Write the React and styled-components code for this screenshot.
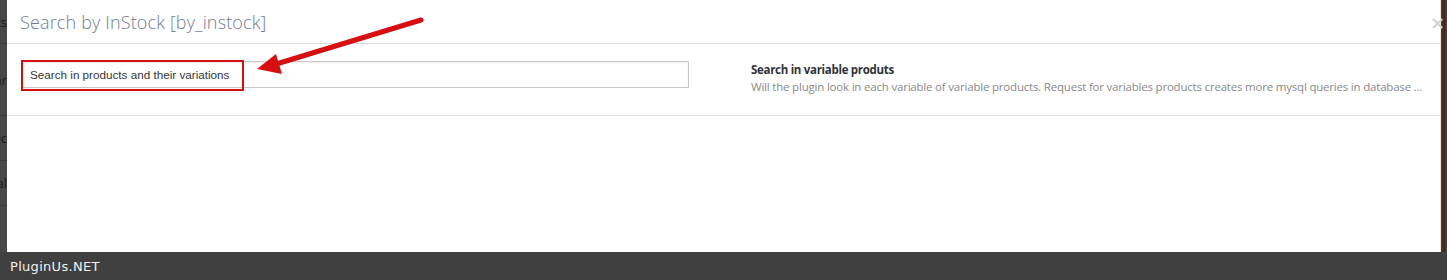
import React from 'react';
import styled, { createGlobalStyle } from 'styled-components';

const GlobalStyle = createGlobalStyle`
  html, body { margin: 0; padding: 0; }
  body { background: #3f3f3f; font-family: "Liberation Sans", Arial, sans-serif; }
`;

const Page = styled.div`
  width: 1447px;
  height: 280px;
  display: flex;
  flex-direction: column;
  overflow: hidden;
`;

const Stage = styled.div`
  height: 252px;
  display: flex;
`;

const BackStrip = styled.div`
  width: 7px;
  background: #474747;
  display: flex;
  flex-direction: column;
  overflow: hidden;
`;

const BackCell = styled.div`
  height: ${p => p.h}px;
  border-bottom: 1px solid #3a3a3a;
  color: #1e1e1e;
  font-size: 13px;
  font-family: "Open Sans", sans-serif;
  display: flex;
  align-items: center;
  justify-content: flex-end;
  white-space: nowrap;
`;

const Wood = styled.div`
  width: 6px;
  background: linear-gradient(90deg, #5a3e2c 0%, #3c281b 50%, #5b4030 100%);
`;

const Modal = styled.div`
  flex: 1;
  background: #fff;
  border-right: 1px solid #e6e6e6;
  position: relative;
`;

const Header = styled.div`
  height: 43px;
  border-bottom: 1px solid #dcdcdc;
  display: flex;
  align-items: center;
  padding: 0 0 0 13px;
  position: relative;
`;

const Title = styled.h3`
  margin: 0;
  font-family: "Open Sans", sans-serif;
  font-weight: 300;
  font-size: 18px;
  color: #6f7d8f;
  letter-spacing: 0.15px;
`;

const Close = styled.span`
  position: absolute;
  right: -5px;
  top: 12px;
  color: #d4d4d4;
  font-size: 18px;
  font-weight: bold;
  font-family: "DejaVu Sans", sans-serif;
`;

const Row = styled.div`
  height: 72px;
  border-bottom: 1px solid #e2e2e2;
  display: grid;
  grid-template-columns: 730px 1fr;
  align-items: start;
  padding-top: 17px;
  box-sizing: border-box;
`;

const Field = styled.div`
  padding-left: 15px;
  position: relative;
`;

const Input = styled.input`
  width: 667px;
  height: 27px;
  box-sizing: border-box;
  border: 1px solid #c8c8c8;
  box-shadow: inset 0 1px 2px rgba(0,0,0,0.08);
  padding: 0 7px;
  font-family: "Liberation Sans", Arial, sans-serif;
  font-size: 11.7px;
  color: #32373c;
  outline: none;
`;

const Highlight = styled.div`
  position: absolute;
  left: 14px;
  top: -1px;
  width: 223px;
  height: 31px;
  box-sizing: border-box;
  border: 2px solid #d30f12;
  pointer-events: none;
`;

const Info = styled.div`
  padding-left: 14px;
  padding-top: 1px;
`;

const InfoTitle = styled.div`
  font-family: "Open Sans", sans-serif;
  font-weight: 700;
  font-size: 11.5px;
  color: #2f3338;
  letter-spacing: -0.3px;
  line-height: 16px;
`;

const InfoText = styled.div`
  font-family: "Open Sans", sans-serif;
  font-size: 11.5px;
  color: #8a8a8a;
  letter-spacing: -0.2px;
  line-height: 17px;
  white-space: nowrap;
`;

const Arrow = styled.svg`
  position: absolute;
  left: 0;
  top: 0;
  pointer-events: none;
`;

const Footer = styled.div`
  height: 28px;
  background: #404040;
  display: flex;
  align-items: center;
  padding-left: 10px;
  color: #f0f0f0;
  font-family: "DejaVu Sans", sans-serif;
  font-size: 13px;
  letter-spacing: 0.3px;
`;

export default function App() {
  return (
    <Page>
      <GlobalStyle />
      <Stage>
        <BackStrip>
          <BackCell h={43}>ts</BackCell>
          <BackCell h={71}>ar</BackCell>
          <BackCell h={44}>oc</BackCell>
          <BackCell h={44}>al</BackCell>
        </BackStrip>
        <Modal>
          <Header>
            <Title>Search by InStock [by_instock]</Title>
            <Close>×</Close>
          </Header>
          <Row>
            <Field>
              <Input readOnly value="Search in products and their variations" />
              <Highlight />
            </Field>
            <Info>
              <InfoTitle>Search in variable produts</InfoTitle>
              <InfoText>Will the plugin look in each variable of variable products. Request for variables products creates more mysql queries in database ...</InfoText>
            </Info>
          </Row>
          <Arrow width="440" height="100" viewBox="0 0 440 100">
            <line x1="414" y1="20" x2="266" y2="65" stroke="#d50f12" strokeWidth="5" strokeLinecap="round" />
            <polygon points="250,69 269,54 275,74" fill="#d50f12" />
          </Arrow>
        </Modal>
        <Wood />
      </Stage>
      <Footer>PluginUs.NET</Footer>
    </Page>
  );
}
